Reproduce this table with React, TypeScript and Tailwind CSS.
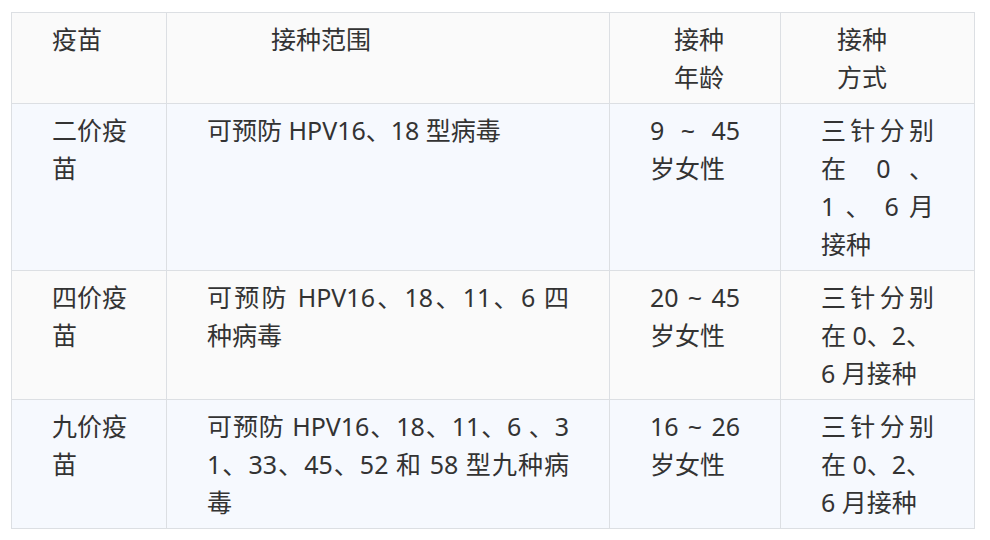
type Line = { text: string; justify?: boolean }
type Cell = Line[]

const J = (text: string): Line => ({ text, justify: true })
const N = (text: string): Line => ({ text })

const ROWS: { bg: string; cells: Cell[] }[] = [
  {
    bg: 'bg-[#f6f9fe]',
    cells: [
      [N('二价疫'), N('苗')],
      [N('可预防 HPV16、18 型病毒')],
      [J('9 ~ 45'), N('岁女性')],
      [J('三针分别'), J('在 0 、'), J('1 、 6 月'), N('接种')],
    ],
  },
  {
    bg: 'bg-[#fafafa]',
    cells: [
      [N('四价疫'), N('苗')],
      [J('可预防 HPV16、18、11、6 四'), N('种病毒')],
      [J('20 ~ 45'), N('岁女性')],
      [J('三针分别'), N('在 0、2、'), N('6 月接种')],
    ],
  },
  {
    bg: 'bg-[#f6f9fe]',
    cells: [
      [N('九价疫'), N('苗')],
      [J('可预防 HPV16、18、11、6 、3'), J('1、33、45、52 和 58 型九种病'), N('毒')],
      [J('16 ~ 26'), N('岁女性')],
      [J('三针分别'), N('在 0、2、'), N('6 月接种')],
    ],
  },
]

function CellLines({ lines }: { lines: Cell }) {
  return (
    <>
      {lines.map((l, i) => (
        <div
          key={i}
          className={l.justify ? 'text-justify [text-align-last:justify] whitespace-nowrap' : 'whitespace-nowrap'}
        >
          {l.text}
        </div>
      ))}
    </>
  )
}

export default function App() {
  return (
    <div
      className="w-[990px] h-[540px] bg-white pl-[11px] pt-[12px] text-[#333] text-[25px] leading-[38px]"
      style={{ fontFamily: '"Noto Sans", "Noto Sans CJK SC", sans-serif' }}
    >
      <table className="table-fixed border-collapse w-[964px]">
        <colgroup>
          <col className="w-[155px]" />
          <col className="w-[443px]" />
          <col className="w-[171px]" />
          <col className="w-[194px]" />
        </colgroup>
        <thead>
          <tr className="bg-[#fafafa] align-top">
            <th className="border border-[#dcdfe3] font-normal text-left pl-[40px] pr-[40px] py-[7px]">疫苗</th>
            <th className="border border-[#dcdfe3] font-normal text-left pl-[104px] pr-[40px] py-[7px]">接种范围</th>
            <th className="border border-[#dcdfe3] font-normal text-left pl-[64px] pr-[10px] py-[7px]">
              <div>接种</div>
              <div>年龄</div>
            </th>
            <th className="border border-[#dcdfe3] font-normal text-left pl-[56px] pr-[10px] py-[7px]">
              <div>接种</div>
              <div>方式</div>
            </th>
          </tr>
        </thead>
        <tbody>
          {ROWS.map((row, r) => (
            <tr key={r} className={`${row.bg} align-top`}>
              {row.cells.map((cell, c) => (
                <td key={c} className="border border-[#dcdfe3] px-[40px] py-[7px]">
                  <CellLines lines={cell} />
                </td>
              ))}
            </tr>
          ))}
        </tbody>
      </table>
    </div>
  )
}
